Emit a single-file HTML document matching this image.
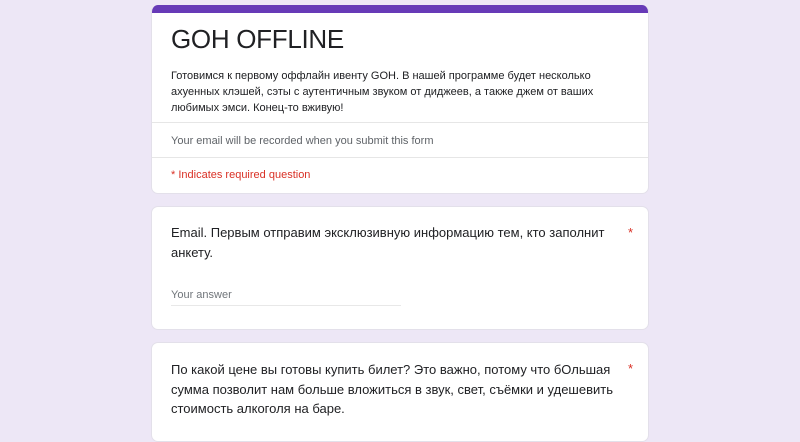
<!DOCTYPE html>
<html><head><meta charset="utf-8"><style>
*{margin:0;padding:0;box-sizing:border-box}
body{width:800px;height:420px;background:#ede7f6;font-family:"Liberation Sans",sans-serif;overflow:hidden;position:relative;color:#202124}
.card{position:absolute;left:151px;width:498px;background:#fff;border-radius:7px;border:1px solid #e3e0ea}
.t{position:absolute;white-space:nowrap}
</style></head><body>
<div class="card" style="top:5px;height:189px;overflow:hidden;border-top:none">
 <div style="height:8px;background:#673ab7"></div>
 <div class="t" style="left:19px;top:19px;font-size:26px;color:#202124;letter-spacing:-0.3px">GOH OFFLINE</div>
 <div class="t" style="left:19px;top:63px;font-size:11px;line-height:16px">Готовимся к первому оффлайн ивенту GOH. В нашей программе будет несколько<br>ахуенных клэшей, сэты с аутентичным звуком от диджеев, а также джем от ваших<br>любимых эмси. Конец-то вживую!</div>
 <div style="position:absolute;left:0;right:0;top:117px;border-top:1px solid #e6e6e6"></div>
 <div class="t" style="left:19px;top:130px;font-size:11px;color:#5f6368">Your email will be recorded when you submit this form</div>
 <div style="position:absolute;left:0;right:0;top:152px;border-top:1px solid #e6e6e6"></div>
 <div class="t" style="left:19px;top:164px;font-size:11px;color:#d93025">* Indicates required question</div>
</div>
<div class="card" style="top:206px;height:124px">
 <div class="t" style="left:19px;top:16px;font-size:13px;line-height:20px">Email. Первым отправим эксклюзивную информацию тем, кто заполнит<br>анкету.</div>
 <div class="t" style="left:476px;top:18px;font-size:13px;color:#d93025">*</div>
 <div class="t" style="left:19px;top:82px;font-size:11px;color:#70757a">Your answer</div>
 <div style="position:absolute;left:19px;top:98px;width:230px;border-top:1px solid #e8e8e8"></div>
</div>
<div class="card" style="top:342px;height:100px">
 <div class="t" style="left:19px;top:17px;font-size:13px;line-height:19.5px">По какой цене вы готовы купить билет? Это важно, потому что бОльшая<br>сумма позволит нам больше вложиться в звук, свет, съёмки и удешевить<br>стоимость алкоголя на баре.</div>
 <div class="t" style="left:476px;top:18px;font-size:13px;color:#d93025">*</div>
</div>
</body></html>
